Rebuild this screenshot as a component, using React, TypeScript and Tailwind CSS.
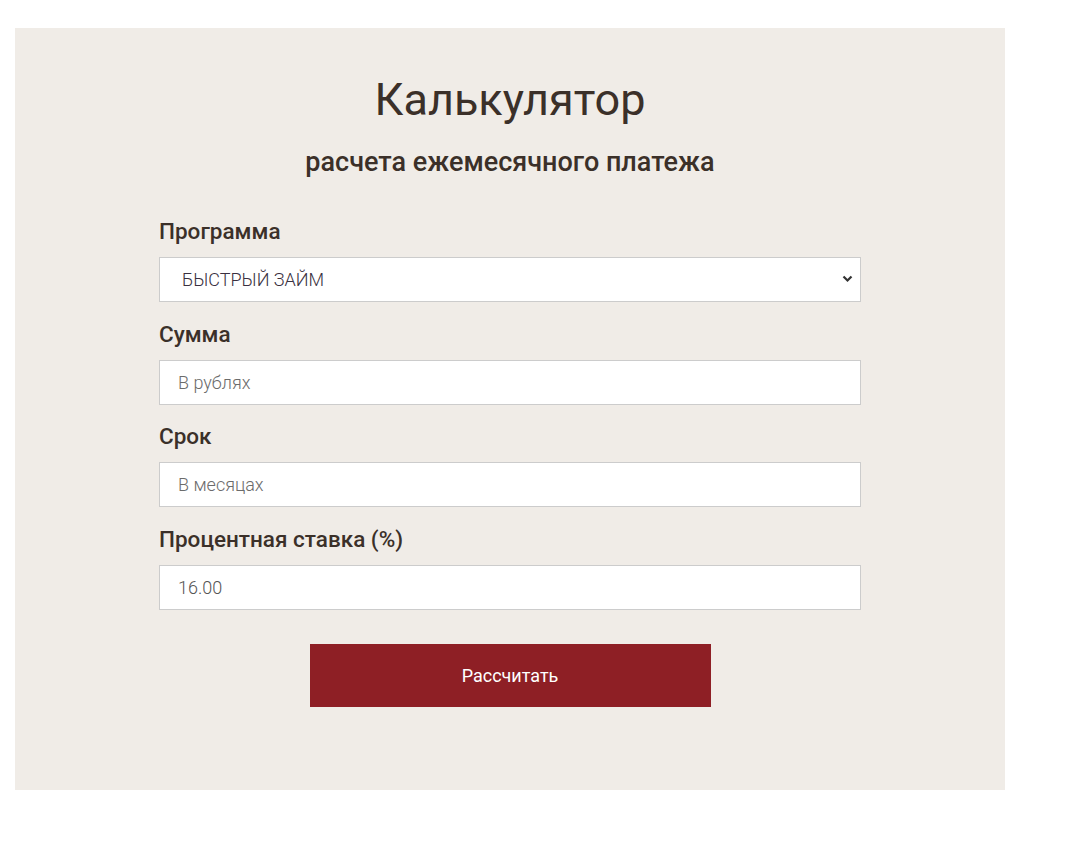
import React, { useState } from "react";

const font = { fontFamily: "Roboto, 'Liberation Sans', sans-serif" };

function Field({ label, children }: { label: string; children: React.ReactNode }) {
  return (
    <div className="mt-[18.5px] first:mt-0">
      <label className="block text-[22.5px] leading-[27px] font-medium text-[#3b3029] mb-[12px]">{label}</label>
      {children}
    </div>
  );
}

export default function App() {
  const [program, setProgram] = useState("fast");
  const [sum, setSum] = useState("");
  const [term, setTerm] = useState("");
  const [rate, setRate] = useState("16.00");

  const inputCls =
    "w-full h-[45px] bg-white border border-[#cccccc] px-[18px] text-[18px] font-light outline-none";

  return (
    <div className="bg-white min-h-[845px] pt-[28px]" style={font}>
      <div className="ml-[15px] w-[990px] h-[762px] bg-[#f0ece7] pt-[45px]">
        <h1 className="text-center text-[45px] leading-[54px] font-normal text-[#3b3029]">Калькулятор</h1>
        <h2 className="mt-[19px] text-center text-[27px] leading-[32px] font-medium text-[#3b3029]">
          расчета ежемесячного платежа
        </h2>

        <form className="w-[702px] mx-auto mt-[40px]" onSubmit={(e) => e.preventDefault()}>
          <Field label="Программа">
            <div className="relative">
              <select
                value={program}
                onChange={(e) => setProgram(e.target.value)}
                className={inputCls + " appearance-none pl-[22px] text-[#3a3040]"}
              >
                <option value="fast">БЫСТРЫЙ ЗАЙМ</option>
                <option value="std">СТАНДАРТНЫЙ</option>
              </select>
              <svg
                className="absolute right-[8px] top-[18px] pointer-events-none"
                width="11"
                height="8"
                viewBox="0 0 11 8"
              >
                <path d="M1.5 1.5 L5.5 5.5 L9.5 1.5" fill="none" stroke="#333333" strokeWidth="2.2" />
              </svg>
            </div>
          </Field>
          <Field label="Сумма">
            <input
              className={inputCls + " text-[#555555] placeholder:text-[#6b6b6b]"}
              placeholder="В рублях"
              value={sum}
              onChange={(e) => setSum(e.target.value)}
            />
          </Field>
          <Field label="Срок">
            <input
              className={inputCls + " text-[#555555] placeholder:text-[#6b6b6b]"}
              placeholder="В месяцах"
              value={term}
              onChange={(e) => setTerm(e.target.value)}
            />
          </Field>
          <Field label="Процентная ставка (%)">
            <input
              className={inputCls + " text-[#555555]"}
              value={rate}
              onChange={(e) => setRate(e.target.value)}
            />
          </Field>

          <div className="flex justify-center mt-[34px]">
            <button
              type="submit"
              className="w-[401px] h-[63px] bg-[#8e1f25] text-white text-[18px] font-normal"
            >
              Рассчитать
            </button>
          </div>
        </form>
      </div>
    </div>
  );
}
